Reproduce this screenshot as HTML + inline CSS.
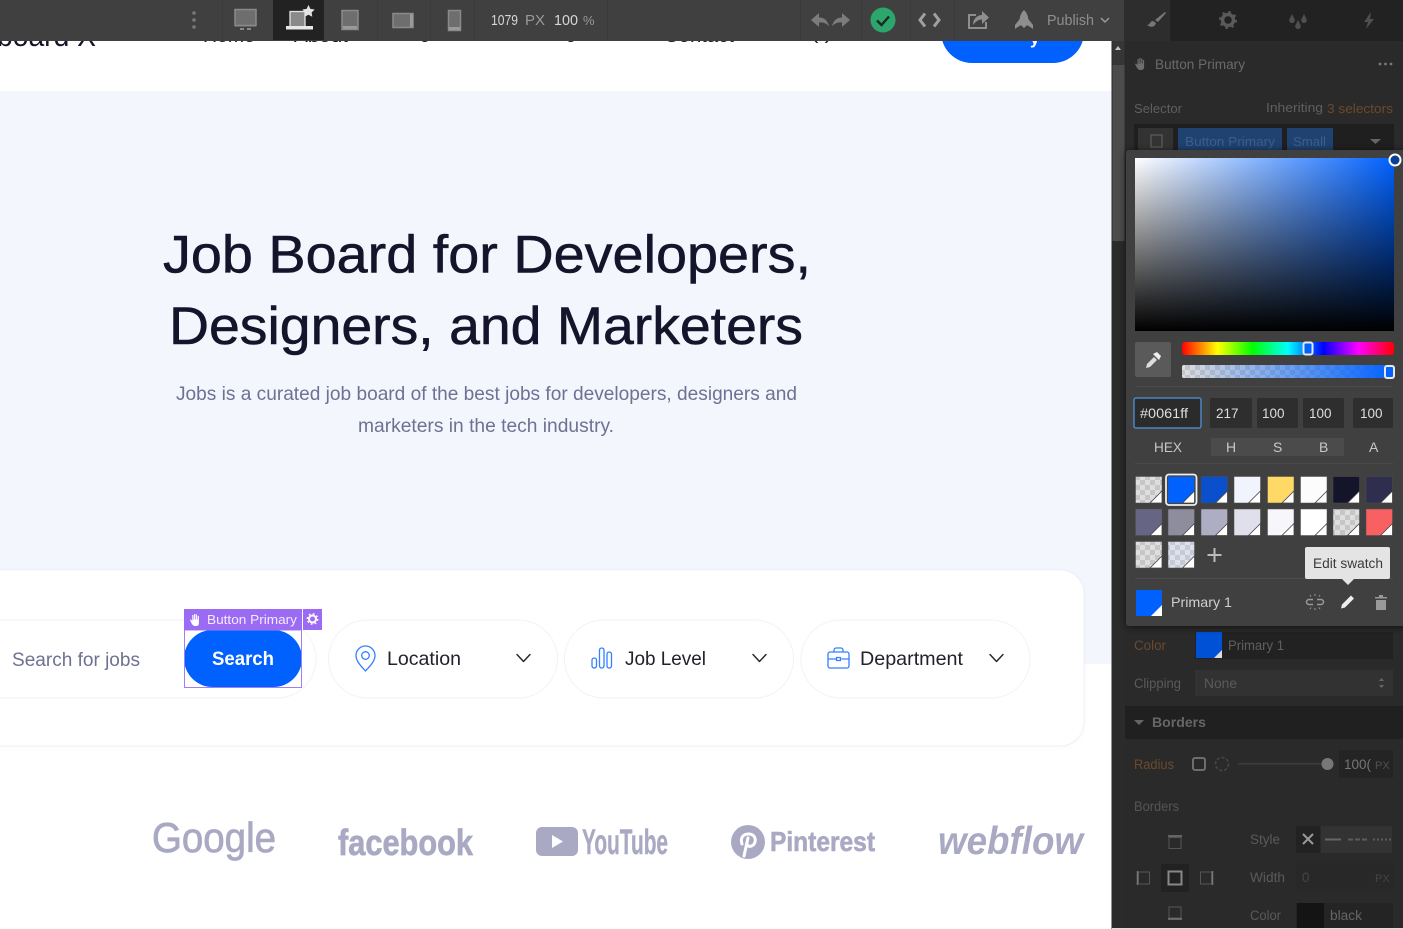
<!DOCTYPE html>
<html><head><meta charset="utf-8"><title>Job Board</title>
<style>
html,body{margin:0;padding:0;width:1403px;height:929px;overflow:hidden;background:#fff}
svg{display:block;font-family:"Liberation Sans",sans-serif}
</style></head><body>
<svg width="1403" height="929" viewBox="0 0 1403 929" xmlns="http://www.w3.org/2000/svg">
<defs>
<pattern id="ck" width="10" height="10" patternUnits="userSpaceOnUse"><rect width="10" height="10" fill="#dedede"/><rect width="5" height="5" fill="#c6c6c6"/><rect x="5" y="5" width="5" height="5" fill="#c6c6c6"/></pattern>
<pattern id="ck2" width="10" height="10" patternUnits="userSpaceOnUse"><rect width="10" height="10" fill="#dde1e9"/><rect width="5" height="5" fill="#c5cad6"/><rect x="5" y="5" width="5" height="5" fill="#c5cad6"/></pattern>
<linearGradient id="sw" x1="0" x2="1" y1="0" y2="0"><stop offset="0" stop-color="#fff"/><stop offset="1" stop-color="#0061ff"/></linearGradient>
<linearGradient id="bk" x1="0" x2="0" y1="0" y2="1"><stop offset="0" stop-color="#000" stop-opacity="0"/><stop offset="1" stop-color="#000"/></linearGradient>
<linearGradient id="hue" x1="0" x2="1" y1="0" y2="0"><stop offset="0" stop-color="#f00"/><stop offset=".167" stop-color="#ff0"/><stop offset=".333" stop-color="#0f0"/><stop offset=".5" stop-color="#0ff"/><stop offset=".667" stop-color="#00f"/><stop offset=".833" stop-color="#f0f"/><stop offset="1" stop-color="#f00"/></linearGradient>
<linearGradient id="al" x1="0" x2="1" y1="0" y2="0"><stop offset="0" stop-color="#0061ff" stop-opacity="0"/><stop offset="1" stop-color="#0061ff"/></linearGradient>
<filter id="sh" x="-10%" y="-10%" width="120%" height="120%"><feDropShadow dx="0" dy="1" stdDeviation="4" flood-color="#000" flood-opacity=".6"/></filter>
<filter id="cs" x="-5%" y="-10%" width="110%" height="120%"><feDropShadow dx="0" dy="1" stdDeviation="2" flood-color="#14142b" flood-opacity=".025"/></filter>
</defs>

<!-- page -->
<rect width="1112" height="929" fill="#fff"/>
<rect y="91" width="1112" height="573" fill="#f4f6fe"/>
<g fill="#14142b" font-size="30"><text x="-3" y="46" textLength="99" lengthAdjust="spacingAndGlyphs">board X</text></g>
<g fill="#14142b" font-size="18"><text x="203" y="42" textLength="52" lengthAdjust="spacingAndGlyphs">Home</text><text x="294" y="42" textLength="54" lengthAdjust="spacingAndGlyphs">About</text><text x="420" y="38" font-size="18">g</text><text x="566" y="38">g</text><text x="664" y="42" textLength="70" lengthAdjust="spacingAndGlyphs">Contact</text><text x="811" y="39" textLength="21" lengthAdjust="spacingAndGlyphs">(  )</text></g>
<rect x="941" y="0" width="143" height="63" rx="31" fill="#0061ff"/>
<text x="1030" y="44" fill="#fff" font-size="17" font-weight="700">y</text>

<g fill="#14142b" stroke="#14142b" stroke-width=".55" font-size="53"><text x="163" y="272.500" textLength="648" lengthAdjust="spacingAndGlyphs">Job Board for Developers,</text><text x="169" y="344" textLength="634" lengthAdjust="spacingAndGlyphs">Designers, and Marketers</text></g>
<g fill="#6e7191" font-size="19.5"><text x="176" y="400" textLength="621" lengthAdjust="spacingAndGlyphs">Jobs is a curated job board of the best jobs for developers, designers and</text><text x="358" y="432" textLength="256" lengthAdjust="spacingAndGlyphs">marketers in the tech industry.</text></g>

<!-- search card -->
<rect x="-40" y="570" width="1124" height="176" rx="24" fill="#fff" stroke="#eff0f6" filter="url(#cs)"/>
<rect x="-60" y="620" width="376" height="78" rx="39" fill="#fff" stroke="#f2f3f8"/>
<text x="12" y="666" fill="#6e7191" font-size="19" textLength="128" lengthAdjust="spacingAndGlyphs">Search for jobs</text>
<rect x="184" y="630" width="118" height="57" rx="28.5" fill="#0061ff"/>
<text x="212" y="665" fill="#fff" font-size="19" font-weight="700" textLength="62" lengthAdjust="spacingAndGlyphs">Search</text>
<rect x="184.5" y="630" width="117" height="57.5" fill="none" stroke="#a47df5"/>
<rect x="184" y="609" width="118" height="21" fill="#9c6bf3"/><rect x="303" y="609" width="19" height="21" fill="#9c6bf3"/>
<path d="M190 620l1 -.5 1.300 1.500v-6h1.200v4.500h.6v-5.500h1.200v5.500h.6v-5h1.200v5h.6v-3.500h1.200v7c0 2-1 3-3 3h-1c-1.500 0-2-1-3-2z" fill="#fff"/>
<text x="207" y="624" fill="#f3ecff" font-size="13" textLength="90" lengthAdjust="spacingAndGlyphs">Button Primary</text>
<circle cx="312.500" cy="619" r="3.500" fill="none" stroke="#fff" stroke-width="2"/><circle cx="312.500" cy="619" r="5.200" fill="none" stroke="#fff" stroke-width="1.400" stroke-dasharray="1.800 2.300"/>

<g fill="#fff" stroke="#f2f3f8"><rect x="328.500" y="620" width="229" height="78" rx="39"/><rect x="564.500" y="620" width="229" height="78" rx="39"/><rect x="801" y="620" width="229" height="78" rx="39"/></g>
<g fill="#22222c" font-size="19.500"><text x="387" y="665" textLength="74" lengthAdjust="spacingAndGlyphs">Location</text><text x="625" y="665" textLength="81" lengthAdjust="spacingAndGlyphs">Job Level</text><text x="860" y="665" textLength="103" lengthAdjust="spacingAndGlyphs">Department</text></g>
<g fill="none" stroke="#22222c" stroke-width="1.400" stroke-linecap="round" stroke-linejoin="round"><path d="M517 654.500l6.500 7 6.500-7"/><path d="M753 654.500l6.500 7 6.500-7"/><path d="M990 654.500l6.500 7 6.500-7"/></g>
<g fill="none" stroke="#0061ff" stroke-width="1.300" opacity=".8" stroke-linejoin="round">
<path d="M365.500 671c-4-4.500-9.500-9.500-9.500-15.500a9.500 9.500 0 0 1 19 0c0 6-5.500 11-9.500 15.500z"/><circle cx="365.500" cy="655.500" r="3.800"/>
<rect x="592" y="658" width="4.500" height="10" rx="2.200"/><rect x="599.500" y="648" width="4.500" height="20" rx="2.200"/><rect x="607" y="652" width="4.500" height="16" rx="2.200"/>
<rect x="828" y="652" width="21" height="16" rx="2"/><path d="M834 652v-2a2 2 0 0 1 2-2h5a2 2 0 0 1 2 2v2M828 659h8.500M841.500 659h7.500"/><rect x="836.500" y="657.500" width="4" height="3"/>
</g>

<!-- logos -->
<g fill="#a9a9c4">
<text x="152" y="852" font-size="42" stroke="#a9a9c4" stroke-width=".8" textLength="124" lengthAdjust="spacingAndGlyphs">Google</text>
<text x="338" y="855" font-size="36" font-weight="700" stroke="#a9a9c4" stroke-width=".7" textLength="135" lengthAdjust="spacingAndGlyphs">facebook</text>
<rect x="536" y="827" width="42" height="29" rx="6"/><path d="M552 835l11 6.500-11 6.500z" fill="#fff"/>
<text x="582" y="854" font-size="35" font-weight="700" stroke="#a9a9c4" stroke-width=".4" textLength="86" lengthAdjust="spacingAndGlyphs">YouTube</text>
<circle cx="748" cy="842" r="17"/><path d="M744 856l4-18M742 844c-2-6 1-10 6.500-10 5 0 7.500 3.500 6.500 8-1 4-6 6-8 2.500" fill="none" stroke="#fff" stroke-width="3" stroke-linecap="round"/>
<text x="770" y="851" font-size="28" font-weight="700" stroke="#a9a9c4" stroke-width=".6" textLength="105" lengthAdjust="spacingAndGlyphs">Pinterest</text>
<text x="938" y="854" font-size="39" font-weight="700" font-style="italic" textLength="145" lengthAdjust="spacingAndGlyphs">webflow</text>
</g>

<!-- top bar -->
<rect width="1125" height="41" fill="#404040"/>
<g stroke="#3a3a3a"><path d="M222.500 0v40M377.500 0v40M430.500 0v40M474.500 0v40M607.500 0v40M800.500 0v40M861.500 0v40M910.500 0v40M954.500 0v40"/></g>
<rect x="273" y="0" width="51" height="40" fill="#222"/>
<g fill="#7c7c7c"><circle cx="194" cy="13" r="1.700"/><circle cx="194" cy="20" r="1.700"/><circle cx="194" cy="27" r="1.700"/></g>
<g fill="#6e6e6e" stroke="#8a8a8a" stroke-width="1.500">
<rect x="235" y="9.500" width="21" height="16"/><rect x="342" y="10.500" width="16" height="19"/><rect x="393" y="13.500" width="20" height="14"/><rect x="448.500" y="10.500" width="12" height="20"/></g>
<path d="M240 29h4M247 29h4" stroke="#8a8a8a" stroke-width="2"/>
<rect x="235" y="25" width="21" height="1.500" fill="#8a8a8a"/>
<rect x="343" y="26" width="14" height="3" fill="#9a9a9a"/><rect x="410" y="14" width="3" height="13" fill="#9a9a9a"/><rect x="449" y="27" width="11" height="3" fill="#9a9a9a"/>
<rect x="290" y="11.500" width="15" height="16" fill="#8a8a8a" stroke="#e4e4e4" stroke-width="1.300"/>
<rect x="286" y="26" width="27" height="3.500" fill="#e8e8e8"/>
<path d="M308.500 5l1.900 3.900 4.300.6-3.100 3 .7 4.300-3.800-2-3.800 2 .7-4.300-3.100-3 4.300-.6z" fill="#e4e4e4"/>
<g font-size="15"><text x="491" y="25" fill="#d6d6d6" textLength="27" lengthAdjust="spacingAndGlyphs">1079</text><text x="525" y="25" fill="#999" textLength="20" lengthAdjust="spacingAndGlyphs">PX</text><text x="554" y="25" fill="#d6d6d6" textLength="24" lengthAdjust="spacingAndGlyphs">100</text><text x="583" y="25" fill="#999" font-size="13">%</text></g>
<g fill="#7c7c7c"><path d="M811 20l8-7v4.500c5 0 8.500 2.500 10 9-2.500-3-5.500-4.500-10-4v4.500z"/><path d="M850 20l-8-7v4.500c-5 0-8.500 2.500-10 9 2.500-3 5.500-4.500 10-4v4.500z"/></g>
<circle cx="883" cy="20" r="12.500" fill="#2ca66c"/><path d="M877 20.500l4.500 4.500 7.500-8.500" fill="none" stroke="#1d2a22" stroke-width="2.400"/>
<path d="M925 13.500l-5 6.500 5 6.500M934 13.500l5 6.500-5 6.500" fill="none" stroke="#a0a0a0" stroke-width="3"/>
<path d="M976 15h-7v13h17v-6" fill="none" stroke="#8e8e8e" stroke-width="2"/><path d="M973 25c0-6 4-10 9-10v-4l7 6.500-7 6.500v-4.500c-4 0-6 2-9 5.500z" fill="#8e8e8e"/>
<path d="M1024 10c3 3 4 6 4.300 9l4.700 6v4l-5-3.500h-1.500l-2.500 2.500-2.500-2.500h-1.500l-5 3.500v-4l4.700-6c.3-3 1.300-6 4.300-9z" fill="#8e8e8e"/>
<text x="1047" y="25" fill="#8e8e8e" font-size="14.500" textLength="47" lengthAdjust="spacingAndGlyphs">Publish</text>
<path d="M1101 18l4 4 4-4" fill="none" stroke="#999" stroke-width="1.500"/>

<!-- scrollbar -->
<rect x="1112" y="41" width="13" height="888" fill="#2b2b2b"/><rect x="1112.500" y="41" width="12" height="24" fill="#363636"/><rect x="1112.500" y="65" width="12" height="176" fill="#4c4c4c"/><path d="M1115 50l3-4 3 4z" fill="#c4c4c4"/><rect x="1111.500" y="41" width="1" height="888" fill="#2a2a2a"/>

<!-- panel -->
<rect x="1125" y="0" width="278" height="929" fill="#2a2a2a"/>
<rect x="1124" y="0" width="279" height="41" fill="#222"/><rect x="1124" y="0" width="46" height="41" fill="#2d2d2d"/>
<path d="M1147 25c3 0 3-4 6-4l3 2c-1 4-5 5-9 2zM1155 20l10-8 1 1-8 9z" fill="#777"/>
<circle cx="1228" cy="20" r="5.500" fill="none" stroke="#5a5a5a" stroke-width="3.500"/><circle cx="1228" cy="20" r="8" fill="none" stroke="#5a5a5a" stroke-width="2" stroke-dasharray="2.500 3.800"/>
<g fill="#4f4f4f"><path d="M1292 14l2.500 5a2.800 2.800 0 1 1-5 0zM1304 14l2.500 5a2.800 2.800 0 1 1-5 0zM1298 20l2.500 5a2.800 2.800 0 1 1-5 0z"/><path d="M1371 12l-7 10h4l-2 7 8-10h-4z"/></g>
<path d="M1135 64l1-.5 1.500 1.500v-6h1.200v4.500h.6v-5.500h1.200v5.500h.6v-5h1.200v5h.6v-3.500h1.200v7c0 2-1 3-3 3h-1c-1.500 0-2-1-3-2z" fill="#6e6e6e"/>
<text x="1155" y="69" fill="#6a6a6a" font-size="13.500" textLength="90" lengthAdjust="spacingAndGlyphs">Button Primary</text>
<g fill="#777"><circle cx="1380" cy="64" r="1.400"/><circle cx="1385.500" cy="64" r="1.400"/><circle cx="1391" cy="64" r="1.400"/></g>
<text x="1134" y="113" fill="#5f5f5f" font-size="13" textLength="48" lengthAdjust="spacingAndGlyphs">Selector</text>
<text x="1266" y="112" fill="#5f5f5f" font-size="13" textLength="57" lengthAdjust="spacingAndGlyphs">Inheriting</text>
<text x="1327" y="113" fill="#6b4a2d" font-size="13" textLength="66" lengthAdjust="spacingAndGlyphs">3 selectors</text>
<rect x="1134" y="124" width="260" height="26" fill="#1f1f1f"/>
<rect x="1138" y="128" width="35" height="22" fill="#333"/><rect x="1151" y="135" width="11" height="12" fill="none" stroke="#666"/>
<rect x="1178" y="128" width="104" height="22" fill="#1f4270"/><rect x="1287" y="128" width="46" height="22" fill="#1f4270"/>
<text x="1185" y="146" fill="#3a5f90" font-size="13" textLength="90" lengthAdjust="spacingAndGlyphs">Button Primary</text><text x="1293" y="146" fill="#3a5f90" font-size="13" textLength="33" lengthAdjust="spacingAndGlyphs">Small</text>
<path d="M1370 139h11l-5.500 5z" fill="#666"/>

<g font-size="13.500">
<rect x="1125" y="625" width="278" height="80" fill="#2a2a2a"/>
<rect x="1195" y="632" width="198" height="27" fill="#222"/>
<rect x="1196" y="632" width="26" height="26" fill="#0051d6"/><path d="M1222 658h-8l8-8z" fill="#ddd"/>
<text x="1134" y="650" fill="#6b4a2d" textLength="32" lengthAdjust="spacingAndGlyphs">Color</text>
<text x="1228" y="650" fill="#5f5f5f" textLength="56" lengthAdjust="spacingAndGlyphs">Primary 1</text>
<text x="1134" y="688" fill="#5a5a5a" textLength="47" lengthAdjust="spacingAndGlyphs">Clipping</text>
<rect x="1195" y="670" width="198" height="26" fill="#323232"/>
<text x="1204" y="688" fill="#5a5a5a" textLength="33" lengthAdjust="spacingAndGlyphs">None</text>
<path d="M1379 681l2.500-3 2.500 3zM1379 685l2.500 3 2.500-3z" fill="#666"/>
<rect x="1125" y="706" width="278" height="33" fill="#202020"/>
<path d="M1134 720h10l-5 5z" fill="#666"/>
<text x="1152" y="727" fill="#666" font-weight="700" textLength="54" lengthAdjust="spacingAndGlyphs">Borders</text>
<text x="1134" y="769" fill="#6b4a2d" textLength="40" lengthAdjust="spacingAndGlyphs">Radius</text>
<rect x="1193" y="758" width="12" height="12" rx="2" fill="none" stroke="#777" stroke-width="1.800"/>
<circle cx="1222" cy="764" r="6.500" fill="none" stroke="#484848" stroke-width="1.500" stroke-dasharray="3 2"/>
<rect x="1238" y="763" width="90" height="1.500" fill="#3c3c3c"/><circle cx="1327.500" cy="764" r="6" fill="#777"/>
<rect x="1339" y="750" width="54" height="28" fill="#242424"/>
<text x="1344" y="769" fill="#777" textLength="27" lengthAdjust="spacingAndGlyphs">100(</text><text x="1375" y="769" fill="#505050" font-size="11">PX</text>
<text x="1134" y="811" fill="#555" textLength="45" lengthAdjust="spacingAndGlyphs">Borders</text>
<rect x="1161" y="864" width="28" height="28" fill="#222"/>
<g fill="none" stroke="#555"><rect x="1169" y="837.500" width="12" height="11"/><rect x="1138.500" y="872" width="11" height="12"/><rect x="1200.500" y="872" width="11" height="12"/><rect x="1169" y="907" width="12" height="11"/></g>
<rect x="1168.500" y="871.500" width="13" height="13" fill="none" stroke="#888" stroke-width="2"/>
<path d="M1168 836h14M1137.500 871v14M1212.500 871v14M1168 919h14" stroke="#777" stroke-width="1.500"/>
<text x="1250" y="844" fill="#5a5a5a" textLength="30" lengthAdjust="spacingAndGlyphs">Style</text>
<text x="1250" y="882" fill="#5a5a5a" textLength="35" lengthAdjust="spacingAndGlyphs">Width</text>
<text x="1250" y="920" fill="#5a5a5a" textLength="31" lengthAdjust="spacingAndGlyphs">Color</text>
<rect x="1296" y="826" width="24" height="27" fill="#222"/><rect x="1321" y="826" width="71" height="27" fill="#333"/>
<path d="M1303 834l10 10M1313 834l-10 10" stroke="#999" stroke-width="2"/>
<path d="M1325 839.500h16" stroke="#666" stroke-width="2"/><path d="M1348 839.500h21" stroke="#5c5c5c" stroke-width="2" stroke-dasharray="5 2"/><path d="M1373 839.500h18" stroke="#5c5c5c" stroke-width="2" stroke-dasharray="2 2"/>
<rect x="1296" y="863" width="97" height="29" fill="#282828"/>
<text x="1302" y="882" fill="#444">0</text><text x="1375" y="882" fill="#444" font-size="11">PX</text>
<rect x="1296" y="903" width="97" height="26" fill="#242424"/><rect x="1297" y="903" width="27" height="26" fill="#141414"/>
<text x="1330" y="920" fill="#666" textLength="32" lengthAdjust="spacingAndGlyphs">black</text>
</g>

<!-- colour picker -->
<rect x="1126" y="150" width="290" height="476" rx="3" fill="#404040" filter="url(#sh)"/>
<rect x="1135" y="158" width="259" height="173" fill="url(#sw)"/><rect x="1135" y="158" width="259" height="173" fill="url(#bk)"/>
<circle cx="1395" cy="160" r="5.500" fill="#0b3f96" stroke="#fff" stroke-width="2"/>
<rect x="1135" y="342" width="36" height="35" rx="2" fill="#5a5a5a"/>
<path d="M1147 364l7-7 3 3-7 7-4 1z" fill="#ddd"/><path d="M1153 354l4-2 4 4-2 4z" fill="#eee"/>
<rect x="1182" y="342" width="212" height="13" rx="3" fill="url(#hue)"/>
<rect x="1303.500" y="342.500" width="9" height="12" rx="2" fill="#0061ff" stroke="#e8e8e8" stroke-width="2"/>
<rect x="1182" y="365" width="212" height="13" fill="url(#ck)" rx="2"/><rect x="1182" y="365" width="212" height="13" fill="url(#al)" rx="2"/>
<rect x="1385" y="366" width="9" height="12" rx="2" fill="#0061ff" stroke="#e8e8e8" stroke-width="2"/>
<rect x="1134" y="398" width="67" height="30" rx="2" fill="#2b2b2b" stroke="#4b86c4" stroke-width="1.500"/>
<g fill="#2e2e2e"><rect x="1210" y="398" width="42" height="30" rx="2"/><rect x="1257" y="398" width="41" height="30" rx="2"/><rect x="1303" y="398" width="41" height="30" rx="2"/><rect x="1353" y="398" width="40" height="30" rx="2"/></g>
<g fill="#dedede" font-size="13.500"><text x="1140" y="418" textLength="48" lengthAdjust="spacingAndGlyphs">#0061ff</text><text x="1216" y="418">217</text><text x="1262" y="418">100</text><text x="1309" y="418">100</text><text x="1360" y="418">100</text></g>
<rect x="1211" y="438" width="133" height="18" fill="#4b4b4b"/>
<g fill="#c8c8c8" font-size="14"><text x="1154" y="452" textLength="28" lengthAdjust="spacingAndGlyphs">HEX</text><text x="1226" y="452">H</text><text x="1273" y="452">S</text><text x="1319" y="452">B</text><text x="1369" y="452">A</text></g>
<path d="M1135 463.500h258M1135 386.500h258" stroke="#4b4b4b"/><path d="M1135 578.500h258" stroke="#4d4d4d"/>

<!-- swatches -->
<g stroke="#4d4d4d" stroke-width=".5">
<rect x="1135.500" y="476.500" width="26.500" height="26.500" fill="url(#ck)"/>
<rect x="1168" y="476.500" width="26.500" height="26.500" fill="#0061ff"/>
<rect x="1201" y="476.500" width="26.500" height="26.500" fill="#0a4fcc"/>
<rect x="1234" y="476.500" width="26.500" height="26.500" fill="#f2f4fd"/>
<rect x="1267.500" y="476.500" width="26.500" height="26.500" fill="#ffd966"/>
<rect x="1300.500" y="476.500" width="26.500" height="26.500" fill="#fcfcfc"/>
<rect x="1333" y="476.500" width="26.500" height="26.500" fill="#14142b"/>
<rect x="1366" y="476.500" width="26.500" height="26.500" fill="#2f2e4f"/>
<rect x="1135.500" y="509" width="26.500" height="26.500" fill="#666684"/>
<rect x="1168" y="509" width="26.500" height="26.500" fill="#8d8d9e"/>
<rect x="1201" y="509" width="26.500" height="26.500" fill="#adadc4"/>
<rect x="1234" y="509" width="26.500" height="26.500" fill="#e0e0ec"/>
<rect x="1267.500" y="509" width="26.500" height="26.500" fill="#f7f7fb"/>
<rect x="1300.500" y="509" width="26.500" height="26.500" fill="#fff"/>
<rect x="1333" y="509" width="26.500" height="26.500" fill="url(#ck)"/>
<rect x="1366" y="509" width="26.500" height="26.500" fill="#f86062"/>
<rect x="1135.500" y="541.500" width="26.500" height="26.500" fill="url(#ck)"/>
<rect x="1168" y="541.500" width="26.500" height="26.500" fill="url(#ck2)"/>
</g>
<rect x="1166" y="474.500" width="30.500" height="30.500" rx="3" fill="none" stroke="#eee" stroke-width="1.800"/>
<g fill="#fff" stroke="#444" stroke-width=".8">
<path d="M1162 503h-12l12-12z"/><path d="M1194.500 503h-12l12-12z"/><path d="M1227.500 503h-12l12-12z"/><path d="M1260.500 503h-12l12-12z"/><path d="M1294 503h-12l12-12z"/><path d="M1327 503h-12l12-12z"/><path d="M1359.500 503h-12l12-12z"/><path d="M1392.500 503h-12l12-12z"/>
<path d="M1162 535.500h-12l12-12z"/><path d="M1194.500 535.500h-12l12-12z"/><path d="M1227.500 535.500h-12l12-12z"/><path d="M1260.500 535.500h-12l12-12z"/><path d="M1294 535.500h-12l12-12z"/><path d="M1327 535.500h-12l12-12z"/><path d="M1359.500 535.500h-12l12-12z"/><path d="M1392.500 535.500h-12l12-12z"/>
<path d="M1162 568h-12l12-12z"/><path d="M1194.500 568h-12l12-12z"/>
</g>
<path d="M1214.500 548v14M1207.500 555h14" stroke="#bbb" stroke-width="2"/>

<!-- bottom row -->
<rect x="1136" y="590" width="26" height="26" fill="#0061ff"/><path d="M1162 616h-11l11-11z" fill="#fff"/>
<text x="1171" y="607" fill="#cfcfcf" font-size="14" textLength="61" lengthAdjust="spacingAndGlyphs">Primary 1</text>
<path d="M1313 599.500h-4a2.500 2.500 0 0 0 0 5h4M1317 599.500h4a2.500 2.500 0 0 1 0 5h-4" fill="none" stroke="#999" stroke-width="1.500"/>
<path d="M1310 595l1 1.500M1315 594v2M1320 595l-1 1.500M1310 609l1-1.500M1315 610v-2M1320 609l-1-1.500" stroke="#999"/>
<path d="M1341 608.500l1-4 9-9 3 3-9 9z" fill="#eee"/>
<path d="M1375 597h12v1.500h-12zM1379 595h4v2h-4zM1376 600h10v10h-10z" fill="#999"/>
<rect x="1305" y="547" width="85" height="32" rx="2" fill="#e4e4e4"/><path d="M1342 579h12l-6 6z" fill="#e4e4e4"/>
<text x="1313" y="568" fill="#3a3a3a" font-size="13.500" textLength="70" lengthAdjust="spacingAndGlyphs">Edit swatch</text>
<rect x="1112" y="928" width="291" height="1" fill="#ddd"/>
</svg>
</body></html>
